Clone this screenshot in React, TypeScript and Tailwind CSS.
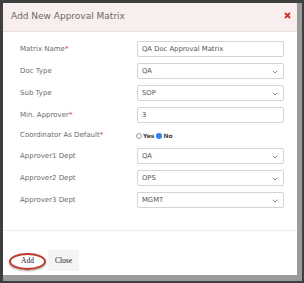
import React from "react";

const Chevron = () => (
  <svg width="6" height="4" viewBox="0 0 6 4" className="absolute right-[5px] top-[6px]">
    <path d="M0.8 0.8 L3 3 L5.2 0.8" fill="none" stroke="#888" strokeWidth="1" />
  </svg>
);

const Req = () => <span className="text-[#e53935]">*</span>;

function Row({ label, req, children }: { label: string; req?: boolean; children: React.ReactNode }) {
  return (
    <div className="flex items-center h-[16px]">
      <div className="w-[117px] text-[7px] text-[#6b6b6b]">
        {label}
        {req && <Req />}
      </div>
      <div className="flex-1">{children}</div>
    </div>
  );
}

function Box({ value, select }: { value: string; select?: boolean }) {
  return (
    <div className="relative h-[16px] border border-[#d4d4d4] rounded-[2px] bg-white flex items-center pl-[4px] text-[6.8px] text-[#555]">
      {value}
      {select && <Chevron />}
    </div>
  );
}

export default function App() {
  return (
    <div className="w-[304px] h-[283px] bg-[#3e3e3e] pt-[3px] pl-[3px] pr-[2px] pb-[2px] font-['DejaVu_Sans',sans-serif]">
      <div className="h-full bg-[#9a9a9a] pr-[5px] pb-[6px]">
        <div className="h-full bg-white flex flex-col">
          <div className="h-[29px] bg-[#f9eeee] border-b border-[#eadede] flex items-center justify-between pl-[8px] pr-[6px]">
            <span className="text-[9px] text-[#6a6a6a]">Add New Approval Matrix</span>
            <svg width="7" height="7" viewBox="0 0 7 7" className="mb-[4px]">
              <path d="M1 1 L6 6 M6 1 L1 6" stroke="#d32f2f" strokeWidth="1.8" />
            </svg>
          </div>
          <div className="flex flex-col gap-[6px] pt-[9px] pl-[17px] pr-[13px] pb-[22px] border-b border-[#ececec]">
            <Row label="Matrix Name" req>
              <Box value="QA Doc Approval Matrix" />
            </Row>
            <Row label="Doc Type">
              <Box value="QA" select />
            </Row>
            <Row label="Sub Type">
              <Box value="SOP" select />
            </Row>
            <Row label="Min. Approver" req>
              <Box value="3" />
            </Row>
            <div className="flex items-center h-[13px]">
              <div className="w-[116px] text-[7px] text-[#6b6b6b]">
                Coordinator As Default<Req />
              </div>
              <div className="flex items-center text-[6px] font-bold text-[#444]">
                <span className="inline-block w-[6px] h-[6px] rounded-full border border-[#999] bg-white mr-[1px]" />
                Yes
                <span className="inline-block w-[6px] h-[6px] rounded-full bg-[#2f7ff0] ml-[2px] mr-[1px]" />
                No
              </div>
            </div>
            <Row label="Approver1 Dept">
              <Box value="QA" select />
            </Row>
            <Row label="Approver2 Dept">
              <Box value="OPS" select />
            </Row>
            <Row label="Approver3 Dept">
              <Box value="MGMT" select />
            </Row>
          </div>
          <div className="flex-1 flex items-end pl-[6px] pb-[4px] font-['Liberation_Serif',serif] text-[7.5px] text-[#222]">
            <div className="relative w-[37px] h-[20px] flex items-center justify-center">
              <div className="absolute left-0 top-[2px] w-[37px] h-[17px] rounded-[50%] border-2 border-[#c0392b] shadow-[0_1px_2px_rgba(0,0,0,0.4)]" />
              <span className="relative">Add</span>
            </div>
            <div className="ml-[2px] w-[31px] h-[21px] bg-[#f5f3f3] flex items-center justify-center">Close</div>
          </div>
        </div>
      </div>
    </div>
  );
}
